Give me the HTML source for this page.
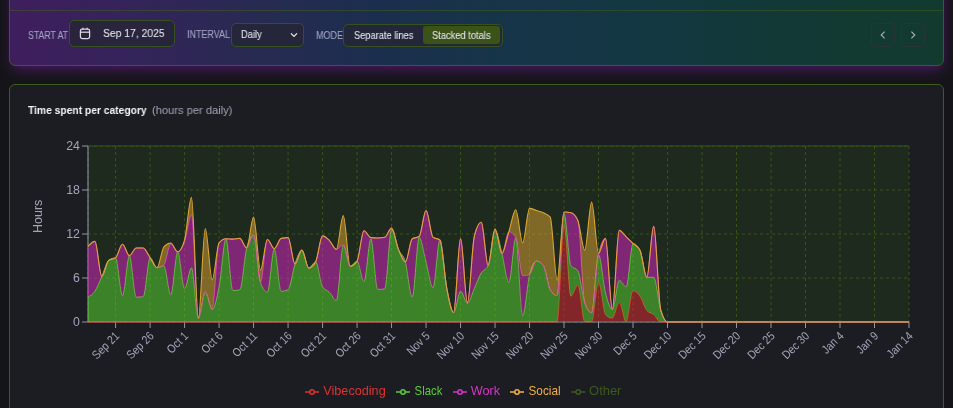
<!DOCTYPE html>
<html lang="en">
<head>
<meta charset="utf-8">
<title>Time spent per category</title>
<style>
*{box-sizing:border-box}
html,body{margin:0;padding:0}
body{width:953px;height:408px;overflow:hidden;background:#151519;color:#e6e8f0;
  font-family:"Liberation Sans","DejaVu Sans",sans-serif;font-size:12px;position:relative}
.toolbar{position:absolute;left:9px;top:-30px;width:935px;height:96px;border:1px solid #3f5c1c;border-radius:6px;
  background:linear-gradient(90deg,rgb(63,30,93) 0.3%,rgb(52,36,90) 12.9%,rgb(40,42,82) 25.8%,rgb(28,46,78) 38.6%,rgb(22,52,72) 51.4%,rgb(20,55,68) 64.3%,rgb(18,56,58) 77.1%,rgb(18,58,50) 89.9%,rgb(19,58,47) 100%);
  box-shadow:1px 6px 14px -3px rgba(112,30,155,.6)}
.sep{position:absolute;left:10px;width:933px;top:10px;height:1px;background:#3f5c1c;opacity:.55}
.t{-webkit-text-stroke:.1px currentColor;will-change:transform;position:absolute;white-space:nowrap;transform-origin:0 50%;line-height:1;color:#dfe0e9}
.upper{text-transform:uppercase;color:#a1a4c4}
.ctl{position:absolute;border:1px solid #36511d;border-radius:5px;background:rgba(38,38,52,.8)}
.nav{background:transparent;border-color:rgba(52,48,62,.7);border-radius:4px}
.on{position:absolute;border-radius:3px;background:#3b5319}
.ico{position:absolute;overflow:visible}
.card{position:absolute;left:9px;top:84px;width:935px;height:340px;border:1px solid #3f5c1c;border-radius:6px;background:#1c1d22}
svg.chart{will-change:transform;position:absolute;left:0;top:0;overflow:visible}
svg.chart text{font-family:"Liberation Sans","DejaVu Sans",sans-serif}
.tick text{font-size:12px;fill:#a0a5b8}
.ylab{font-size:13.3px;fill:#a0a5b8}
.legend text{font-size:13px}
</style>
</head>
<body>
<div role="toolbar" aria-label="Chart controls">
<div class="toolbar"></div>
<div class="sep"></div>
<span class="t upper" style="left:27.6px;top:30px;font-size:10px;line-height:11.07px;transform:scaleX(0.8707);">START AT</span>
<div class="ctl" style="left:69px;top:20px;width:106px;height:27px"></div>
<svg class="ico" style="left:79px;top:27px" width="12" height="13" viewBox="0 0 12 13" fill="none" stroke="#d9dae4" stroke-width="1.25" aria-hidden="true"><rect x="1.4" y="2.2" width="9.2" height="9.3" rx="1.7"/><line x1="1.4" y1="5.2" x2="10.6" y2="5.2"/><line x1="3.9" y1="0.8" x2="3.9" y2="2.6"/><line x1="8.1" y1="0.8" x2="8.1" y2="2.6"/></svg>
<span class="t" style="left:102.8px;top:27px;font-size:11.7px;line-height:11.89px;transform:scaleX(0.8863);">Sep 17, 2025</span>
<span class="t upper" style="left:186.6px;top:29px;font-size:10px;line-height:11.07px;transform:scaleX(0.8962);">INTERVAL</span>
<div class="ctl" style="left:231px;top:23px;width:73px;height:24px"></div>
<span class="t" style="left:241.1px;top:29px;font-size:10.5px;line-height:10.72px;transform:scaleX(0.8912);">Daily</span>
<svg class="ico" style="left:290px;top:31px" width="8" height="8" viewBox="0 0 8 8" fill="none" stroke="#e9eaf2" stroke-width="1.3"><path d="M1 2.4 L4 5.4 L7 2.4"/></svg>
<span class="t upper" style="left:315.8px;top:30px;font-size:10px;line-height:11.07px;transform:scaleX(0.9033);">MODE</span>
<div class="ctl" style="left:343px;top:24px;width:160px;height:23px"></div>
<div class="on" style="left:423px;top:26px;width:77px;height:18px"></div>
<span class="t" style="left:354px;top:30px;font-size:10.5px;line-height:10.72px;transform:scaleX(0.8834);">Separate lines</span>
<span class="t" style="left:432px;top:30px;font-size:10.5px;line-height:10.72px;transform:scaleX(0.8885);">Stacked totals</span>
<div class="ctl nav" style="left:871px;top:23px;width:24px;height:24px"></div>
<svg class="ico" style="left:879px;top:31px" width="8" height="8" viewBox="0 0 8 8" fill="none" stroke="#a4adb6" stroke-width="1.15"><path d="M5.6 0.6 L2.2 4 L5.6 7.4"/></svg>
<div class="ctl nav" style="left:901px;top:23px;width:24px;height:24px"></div>
<svg class="ico" style="left:909px;top:31px" width="8" height="8" viewBox="0 0 8 8" fill="none" stroke="#a4adb6" stroke-width="1.15"><path d="M2.4 0.6 L5.8 4 L2.4 7.4"/></svg>
</div>
<div role="region" aria-label="Time spent per category chart">
<div class="card"></div>
<span class="t" style="left:28.2px;top:104px;font-size:11.3px;line-height:12.17px;transform:scaleX(0.9102);color:#f2f3f7;font-weight:700;-webkit-text-stroke:0;">Time spent per category</span>
<span class="t" style="left:152px;top:104px;font-size:11.3px;line-height:12.17px;transform:scaleX(0.9847);color:#969bad;">(hours per daily)</span>
<svg class="chart" width="953" height="408" viewBox="0 0 953 408" role="img" aria-label="Time spent per category">
<path d="M88,246.47C90.3,243.9,92.6,241.33,94.9,241.33C97.2,241.33,99.5,276.53,101.8,276.53C104.1,276.53,106.4,262.11,108.7,260.4C111,258.69,113.3,259.54,115.6,257.83C117.9,256.12,120.2,244.27,122.5,244.27C124.8,244.27,127.1,255.63,129.39,255.63C131.69,255.63,133.99,247.93,136.29,247.93C138.59,247.93,140.89,247.93,143.19,247.93C145.49,247.93,147.79,254.53,150.09,257.83C152.39,261.13,154.69,267.73,156.99,267.73C159.29,267.73,161.59,249.42,163.89,246.83C166.19,244.24,168.49,242.95,170.79,242.95C173.09,242.95,175.39,251.82,177.69,251.82C179.99,251.82,182.29,247.84,184.59,239.87C186.89,231.9,189.19,197.33,191.49,197.33C193.79,197.33,196.09,318.33,198.39,318.33C200.69,318.33,202.99,228.43,205.29,228.43C207.59,228.43,209.89,279.83,212.18,279.83C214.48,279.83,216.78,245.49,219.08,242.8C221.38,240.11,223.68,238.77,225.98,238.77C228.28,238.77,230.58,239.13,232.88,239.13C235.18,239.13,237.48,238.4,239.78,238.4C242.08,238.4,244.38,247.93,246.68,247.93C248.98,247.93,251.28,217.13,253.58,217.13C255.88,217.13,258.18,269.93,260.48,269.93C262.78,269.93,265.08,239.5,267.38,239.5C269.68,239.5,271.98,248.67,274.28,248.67C276.58,248.67,278.88,238.89,281.18,238.4C283.48,237.91,285.78,237.67,288.08,237.67C290.38,237.67,292.68,264.07,294.97,264.07C297.27,264.07,299.57,250.13,301.87,250.13C304.17,250.13,306.47,268.1,308.77,268.1C311.07,268.1,313.37,266.02,315.67,261.87C317.97,257.71,320.27,235.83,322.57,235.83C324.87,235.83,327.17,238.34,329.47,240.6C331.77,242.86,334.07,249.4,336.37,249.4C338.67,249.4,340.97,215.67,343.27,215.67C345.57,215.67,347.87,266.27,350.17,266.27C352.47,266.27,354.77,264.56,357.07,261.13C359.37,257.71,361.67,230.7,363.97,230.7C366.27,230.7,368.57,237.42,370.87,237.67C373.17,237.91,375.46,238.03,377.76,238.03C380.06,238.03,382.36,237.79,384.66,237.3C386.96,236.81,389.26,228.13,391.56,228.13C393.86,228.13,396.16,243.78,398.46,249.4C400.76,255.02,403.06,261.87,405.36,261.87C407.66,261.87,409.96,240.23,412.26,238.77C414.56,237.3,416.86,238.03,419.16,236.57C421.46,235.1,423.76,210.53,426.06,210.53C428.36,210.53,430.66,235.59,432.96,237.3C435.26,239.01,437.56,238.16,439.86,239.87C442.16,241.58,444.46,276.17,446.76,288.27C449.06,300.37,451.36,312.47,453.66,312.47C455.96,312.47,458.25,238.77,460.55,238.77C462.85,238.77,465.15,303.08,467.45,303.08C469.75,303.08,472.05,245.49,474.35,236.2C476.65,226.91,478.95,222.27,481.25,222.27C483.55,222.27,485.85,265.53,488.15,265.53C490.45,265.53,492.75,228.87,495.05,228.87C497.35,228.87,499.65,253.43,501.95,253.43C504.25,253.43,506.55,239.07,508.85,231.8C511.15,224.53,513.45,209.8,515.75,209.8C518.05,209.8,520.35,242.8,522.65,242.8C524.95,242.8,527.25,208.33,529.55,208.33C531.85,208.33,534.15,209.8,536.45,210.53C538.75,211.27,541.04,211.63,543.34,212.73C545.64,213.83,547.94,214.2,550.24,217.13C552.54,220.07,554.84,280.2,557.14,280.2C559.44,280.2,561.74,212,564.04,212C566.34,212,568.64,212.24,570.94,212.73C573.24,213.22,575.54,215.3,577.84,220.43C580.14,225.57,582.44,250.13,584.74,250.13C587.04,250.13,589.34,202.1,591.64,202.1C593.94,202.1,596.24,253.43,598.54,253.43C600.84,253.43,603.14,238.4,605.44,238.4C607.74,238.4,610.04,309.53,612.34,309.53C614.64,309.53,616.94,230.33,619.24,230.33C621.54,230.33,623.83,234.59,626.13,236.79C628.43,238.99,630.73,241.31,633.03,243.53C635.33,245.76,637.63,245.73,639.93,250.13C642.23,254.53,644.53,277.27,646.83,277.27C649.13,277.27,651.43,226.3,653.73,226.3C656.03,226.3,658.33,301.22,660.63,309.53C662.93,317.84,665.23,322,667.53,322C669.83,322,672.13,322,674.43,322C676.73,322,679.03,322,681.33,322C683.63,322,685.93,322,688.23,322C690.53,322,692.83,322,695.13,322C697.43,322,699.73,322,702.03,322C704.32,322,706.62,322,708.92,322C711.22,322,713.52,322,715.82,322C718.12,322,720.42,322,722.72,322C725.02,322,727.32,322,729.62,322C731.92,322,734.22,322,736.52,322C738.82,322,741.12,322,743.42,322C745.72,322,748.02,322,750.32,322C752.62,322,754.92,322,757.22,322C759.52,322,761.82,322,764.12,322C766.42,322,768.72,322,771.02,322C773.32,322,775.62,322,777.92,322C780.22,322,782.52,322,784.82,322C787.11,322,789.41,322,791.71,322C794.01,322,796.31,322,798.61,322C800.91,322,803.21,322,805.51,322C807.81,322,810.11,322,812.41,322C814.71,322,817.01,322,819.31,322C821.61,322,823.91,322,826.21,322C828.51,322,830.81,322,833.11,322C835.41,322,837.71,322,840.01,322C842.31,322,844.61,322,846.91,322C849.21,322,851.51,322,853.81,322C856.11,322,858.41,322,860.71,322C863.01,322,865.31,322,867.61,322C869.9,322,872.2,322,874.5,322C876.8,322,879.1,322,881.4,322C883.7,322,886,322,888.3,322C890.6,322,892.9,322,895.2,322C897.5,322,899.8,322,902.1,322C904.4,322,906.7,322,909,322L909,146L88,146Z" fill="#1f2a1f" stroke="none"/>
<g stroke="#37531c" stroke-width="1" stroke-dasharray="3 3" fill="none">
<line x1="88" x2="909" y1="322" y2="322"/>
<line x1="88" x2="909" y1="278" y2="278"/>
<line x1="88" x2="909" y1="234" y2="234"/>
<line x1="88" x2="909" y1="190" y2="190"/>
<line x1="88" x2="909" y1="146" y2="146"/>
<line x1="88" x2="88" y1="146" y2="322"/>
<line x1="115.6" x2="115.6" y1="146" y2="322"/>
<line x1="150.09" x2="150.09" y1="146" y2="322"/>
<line x1="184.59" x2="184.59" y1="146" y2="322"/>
<line x1="219.08" x2="219.08" y1="146" y2="322"/>
<line x1="253.58" x2="253.58" y1="146" y2="322"/>
<line x1="288.08" x2="288.08" y1="146" y2="322"/>
<line x1="322.57" x2="322.57" y1="146" y2="322"/>
<line x1="357.07" x2="357.07" y1="146" y2="322"/>
<line x1="391.56" x2="391.56" y1="146" y2="322"/>
<line x1="426.06" x2="426.06" y1="146" y2="322"/>
<line x1="460.55" x2="460.55" y1="146" y2="322"/>
<line x1="495.05" x2="495.05" y1="146" y2="322"/>
<line x1="529.55" x2="529.55" y1="146" y2="322"/>
<line x1="564.04" x2="564.04" y1="146" y2="322"/>
<line x1="598.54" x2="598.54" y1="146" y2="322"/>
<line x1="633.03" x2="633.03" y1="146" y2="322"/>
<line x1="667.53" x2="667.53" y1="146" y2="322"/>
<line x1="702.03" x2="702.03" y1="146" y2="322"/>
<line x1="736.52" x2="736.52" y1="146" y2="322"/>
<line x1="771.02" x2="771.02" y1="146" y2="322"/>
<line x1="805.51" x2="805.51" y1="146" y2="322"/>
<line x1="840.01" x2="840.01" y1="146" y2="322"/>
<line x1="874.5" x2="874.5" y1="146" y2="322"/>
<line x1="909" x2="909" y1="146" y2="322"/>
</g>
<g stroke="#9297a8" stroke-width="1" fill="none">
<line x1="88" x2="88" y1="146" y2="322"/>
<line x1="88" x2="909" y1="322" y2="322"/>
<line x1="82" x2="88" y1="322" y2="322"/>
<line x1="82" x2="88" y1="278" y2="278"/>
<line x1="82" x2="88" y1="234" y2="234"/>
<line x1="82" x2="88" y1="190" y2="190"/>
<line x1="82" x2="88" y1="146" y2="146"/>
<line x1="115.6" x2="115.6" y1="322" y2="328"/>
<line x1="150.09" x2="150.09" y1="322" y2="328"/>
<line x1="184.59" x2="184.59" y1="322" y2="328"/>
<line x1="219.08" x2="219.08" y1="322" y2="328"/>
<line x1="253.58" x2="253.58" y1="322" y2="328"/>
<line x1="288.08" x2="288.08" y1="322" y2="328"/>
<line x1="322.57" x2="322.57" y1="322" y2="328"/>
<line x1="357.07" x2="357.07" y1="322" y2="328"/>
<line x1="391.56" x2="391.56" y1="322" y2="328"/>
<line x1="426.06" x2="426.06" y1="322" y2="328"/>
<line x1="460.55" x2="460.55" y1="322" y2="328"/>
<line x1="495.05" x2="495.05" y1="322" y2="328"/>
<line x1="529.55" x2="529.55" y1="322" y2="328"/>
<line x1="564.04" x2="564.04" y1="322" y2="328"/>
<line x1="598.54" x2="598.54" y1="322" y2="328"/>
<line x1="633.03" x2="633.03" y1="322" y2="328"/>
<line x1="667.53" x2="667.53" y1="322" y2="328"/>
<line x1="702.03" x2="702.03" y1="322" y2="328"/>
<line x1="736.52" x2="736.52" y1="322" y2="328"/>
<line x1="771.02" x2="771.02" y1="322" y2="328"/>
<line x1="805.51" x2="805.51" y1="322" y2="328"/>
<line x1="840.01" x2="840.01" y1="322" y2="328"/>
<line x1="874.5" x2="874.5" y1="322" y2="328"/>
<line x1="909" x2="909" y1="322" y2="328"/>
</g>
<path d="M88,322C90.3,322,92.6,322,94.9,322C97.2,322,99.5,322,101.8,322C104.1,322,106.4,322,108.7,322C111,322,113.3,322,115.6,322C117.9,322,120.2,322,122.5,322C124.8,322,127.1,322,129.39,322C131.69,322,133.99,322,136.29,322C138.59,322,140.89,322,143.19,322C145.49,322,147.79,322,150.09,322C152.39,322,154.69,322,156.99,322C159.29,322,161.59,322,163.89,322C166.19,322,168.49,322,170.79,322C173.09,322,175.39,322,177.69,322C179.99,322,182.29,322,184.59,322C186.89,322,189.19,322,191.49,322C193.79,322,196.09,322,198.39,322C200.69,322,202.99,322,205.29,322C207.59,322,209.89,322,212.18,322C214.48,322,216.78,322,219.08,322C221.38,322,223.68,322,225.98,322C228.28,322,230.58,322,232.88,322C235.18,322,237.48,322,239.78,322C242.08,322,244.38,322,246.68,322C248.98,322,251.28,322,253.58,322C255.88,322,258.18,322,260.48,322C262.78,322,265.08,322,267.38,322C269.68,322,271.98,322,274.28,322C276.58,322,278.88,322,281.18,322C283.48,322,285.78,322,288.08,322C290.38,322,292.68,322,294.97,322C297.27,322,299.57,322,301.87,322C304.17,322,306.47,322,308.77,322C311.07,322,313.37,322,315.67,322C317.97,322,320.27,322,322.57,322C324.87,322,327.17,322,329.47,322C331.77,322,334.07,322,336.37,322C338.67,322,340.97,322,343.27,322C345.57,322,347.87,322,350.17,322C352.47,322,354.77,322,357.07,322C359.37,322,361.67,322,363.97,322C366.27,322,368.57,322,370.87,322C373.17,322,375.46,322,377.76,322C380.06,322,382.36,322,384.66,322C386.96,322,389.26,322,391.56,322C393.86,322,396.16,322,398.46,322C400.76,322,403.06,322,405.36,322C407.66,322,409.96,322,412.26,322C414.56,322,416.86,322,419.16,322C421.46,322,423.76,322,426.06,322C428.36,322,430.66,322,432.96,322C435.26,322,437.56,322,439.86,322C442.16,322,444.46,322,446.76,322C449.06,322,451.36,322,453.66,322C455.96,322,458.25,322,460.55,322C462.85,322,465.15,322,467.45,322C469.75,322,472.05,322,474.35,322C476.65,322,478.95,322,481.25,322C483.55,322,485.85,322,488.15,322C490.45,322,492.75,322,495.05,322C497.35,322,499.65,322,501.95,322C504.25,322,506.55,322,508.85,322C511.15,322,513.45,322,515.75,322C518.05,322,520.35,322,522.65,322C524.95,322,527.25,322,529.55,322C531.85,322,534.15,322,536.45,322C538.75,322,541.04,322,543.34,322C545.64,322,547.94,322,550.24,322C552.54,322,554.84,322,557.14,322C559.44,322,561.74,226.67,564.04,226.67C566.34,226.67,568.64,296.33,570.94,296.33C573.24,296.33,575.54,285.33,577.84,285.33C580.14,285.33,582.44,322,584.74,322C587.04,322,589.34,322,591.64,322C593.94,322,596.24,282.55,598.54,282.55C600.84,282.55,603.14,312.22,605.44,314.67C607.74,317.11,610.04,318.33,612.34,318.33C614.64,318.33,616.94,302.57,619.24,302.57C621.54,302.57,623.83,322,626.13,322C628.43,322,630.73,290.83,633.03,290.83C635.33,290.83,637.63,293.03,639.93,296.33C642.23,299.63,644.53,307.94,646.83,310.63C649.13,313.32,651.43,312.77,653.73,314.67C656.03,316.56,658.33,322,660.63,322C662.93,322,665.23,322,667.53,322C669.83,322,672.13,322,674.43,322C676.73,322,679.03,322,681.33,322C683.63,322,685.93,322,688.23,322C690.53,322,692.83,322,695.13,322C697.43,322,699.73,322,702.03,322C704.32,322,706.62,322,708.92,322C711.22,322,713.52,322,715.82,322C718.12,322,720.42,322,722.72,322C725.02,322,727.32,322,729.62,322C731.92,322,734.22,322,736.52,322C738.82,322,741.12,322,743.42,322C745.72,322,748.02,322,750.32,322C752.62,322,754.92,322,757.22,322C759.52,322,761.82,322,764.12,322C766.42,322,768.72,322,771.02,322C773.32,322,775.62,322,777.92,322C780.22,322,782.52,322,784.82,322C787.11,322,789.41,322,791.71,322C794.01,322,796.31,322,798.61,322C800.91,322,803.21,322,805.51,322C807.81,322,810.11,322,812.41,322C814.71,322,817.01,322,819.31,322C821.61,322,823.91,322,826.21,322C828.51,322,830.81,322,833.11,322C835.41,322,837.71,322,840.01,322C842.31,322,844.61,322,846.91,322C849.21,322,851.51,322,853.81,322C856.11,322,858.41,322,860.71,322C863.01,322,865.31,322,867.61,322C869.9,322,872.2,322,874.5,322C876.8,322,879.1,322,881.4,322C883.7,322,886,322,888.3,322C890.6,322,892.9,322,895.2,322C897.5,322,899.8,322,902.1,322C904.4,322,906.7,322,909,322L909,322C906.7,322,904.4,322,902.1,322C899.8,322,897.5,322,895.2,322C892.9,322,890.6,322,888.3,322C886,322,883.7,322,881.4,322C879.1,322,876.8,322,874.5,322C872.2,322,869.9,322,867.61,322C865.31,322,863.01,322,860.71,322C858.41,322,856.11,322,853.81,322C851.51,322,849.21,322,846.91,322C844.61,322,842.31,322,840.01,322C837.71,322,835.41,322,833.11,322C830.81,322,828.51,322,826.21,322C823.91,322,821.61,322,819.31,322C817.01,322,814.71,322,812.41,322C810.11,322,807.81,322,805.51,322C803.21,322,800.91,322,798.61,322C796.31,322,794.01,322,791.71,322C789.41,322,787.11,322,784.82,322C782.52,322,780.22,322,777.92,322C775.62,322,773.32,322,771.02,322C768.72,322,766.42,322,764.12,322C761.82,322,759.52,322,757.22,322C754.92,322,752.62,322,750.32,322C748.02,322,745.72,322,743.42,322C741.12,322,738.82,322,736.52,322C734.22,322,731.92,322,729.62,322C727.32,322,725.02,322,722.72,322C720.42,322,718.12,322,715.82,322C713.52,322,711.22,322,708.92,322C706.62,322,704.32,322,702.03,322C699.73,322,697.43,322,695.13,322C692.83,322,690.53,322,688.23,322C685.93,322,683.63,322,681.33,322C679.03,322,676.73,322,674.43,322C672.13,322,669.83,322,667.53,322C665.23,322,662.93,322,660.63,322C658.33,322,656.03,322,653.73,322C651.43,322,649.13,322,646.83,322C644.53,322,642.23,322,639.93,322C637.63,322,635.33,322,633.03,322C630.73,322,628.43,322,626.13,322C623.83,322,621.54,322,619.24,322C616.94,322,614.64,322,612.34,322C610.04,322,607.74,322,605.44,322C603.14,322,600.84,322,598.54,322C596.24,322,593.94,322,591.64,322C589.34,322,587.04,322,584.74,322C582.44,322,580.14,322,577.84,322C575.54,322,573.24,322,570.94,322C568.64,322,566.34,322,564.04,322C561.74,322,559.44,322,557.14,322C554.84,322,552.54,322,550.24,322C547.94,322,545.64,322,543.34,322C541.04,322,538.75,322,536.45,322C534.15,322,531.85,322,529.55,322C527.25,322,524.95,322,522.65,322C520.35,322,518.05,322,515.75,322C513.45,322,511.15,322,508.85,322C506.55,322,504.25,322,501.95,322C499.65,322,497.35,322,495.05,322C492.75,322,490.45,322,488.15,322C485.85,322,483.55,322,481.25,322C478.95,322,476.65,322,474.35,322C472.05,322,469.75,322,467.45,322C465.15,322,462.85,322,460.55,322C458.25,322,455.96,322,453.66,322C451.36,322,449.06,322,446.76,322C444.46,322,442.16,322,439.86,322C437.56,322,435.26,322,432.96,322C430.66,322,428.36,322,426.06,322C423.76,322,421.46,322,419.16,322C416.86,322,414.56,322,412.26,322C409.96,322,407.66,322,405.36,322C403.06,322,400.76,322,398.46,322C396.16,322,393.86,322,391.56,322C389.26,322,386.96,322,384.66,322C382.36,322,380.06,322,377.76,322C375.46,322,373.17,322,370.87,322C368.57,322,366.27,322,363.97,322C361.67,322,359.37,322,357.07,322C354.77,322,352.47,322,350.17,322C347.87,322,345.57,322,343.27,322C340.97,322,338.67,322,336.37,322C334.07,322,331.77,322,329.47,322C327.17,322,324.87,322,322.57,322C320.27,322,317.97,322,315.67,322C313.37,322,311.07,322,308.77,322C306.47,322,304.17,322,301.87,322C299.57,322,297.27,322,294.97,322C292.68,322,290.38,322,288.08,322C285.78,322,283.48,322,281.18,322C278.88,322,276.58,322,274.28,322C271.98,322,269.68,322,267.38,322C265.08,322,262.78,322,260.48,322C258.18,322,255.88,322,253.58,322C251.28,322,248.98,322,246.68,322C244.38,322,242.08,322,239.78,322C237.48,322,235.18,322,232.88,322C230.58,322,228.28,322,225.98,322C223.68,322,221.38,322,219.08,322C216.78,322,214.48,322,212.18,322C209.89,322,207.59,322,205.29,322C202.99,322,200.69,322,198.39,322C196.09,322,193.79,322,191.49,322C189.19,322,186.89,322,184.59,322C182.29,322,179.99,322,177.69,322C175.39,322,173.09,322,170.79,322C168.49,322,166.19,322,163.89,322C161.59,322,159.29,322,156.99,322C154.69,322,152.39,322,150.09,322C147.79,322,145.49,322,143.19,322C140.89,322,138.59,322,136.29,322C133.99,322,131.69,322,129.39,322C127.1,322,124.8,322,122.5,322C120.2,322,117.9,322,115.6,322C113.3,322,111,322,108.7,322C106.4,322,104.1,322,101.8,322C99.5,322,97.2,322,94.9,322C92.6,322,90.3,322,88,322Z" fill="#d72e32" fill-opacity="0.55" stroke="none"/>
<path d="M88,322C90.3,322,92.6,322,94.9,322C97.2,322,99.5,322,101.8,322C104.1,322,106.4,322,108.7,322C111,322,113.3,322,115.6,322C117.9,322,120.2,322,122.5,322C124.8,322,127.1,322,129.39,322C131.69,322,133.99,322,136.29,322C138.59,322,140.89,322,143.19,322C145.49,322,147.79,322,150.09,322C152.39,322,154.69,322,156.99,322C159.29,322,161.59,322,163.89,322C166.19,322,168.49,322,170.79,322C173.09,322,175.39,322,177.69,322C179.99,322,182.29,322,184.59,322C186.89,322,189.19,322,191.49,322C193.79,322,196.09,322,198.39,322C200.69,322,202.99,322,205.29,322C207.59,322,209.89,322,212.18,322C214.48,322,216.78,322,219.08,322C221.38,322,223.68,322,225.98,322C228.28,322,230.58,322,232.88,322C235.18,322,237.48,322,239.78,322C242.08,322,244.38,322,246.68,322C248.98,322,251.28,322,253.58,322C255.88,322,258.18,322,260.48,322C262.78,322,265.08,322,267.38,322C269.68,322,271.98,322,274.28,322C276.58,322,278.88,322,281.18,322C283.48,322,285.78,322,288.08,322C290.38,322,292.68,322,294.97,322C297.27,322,299.57,322,301.87,322C304.17,322,306.47,322,308.77,322C311.07,322,313.37,322,315.67,322C317.97,322,320.27,322,322.57,322C324.87,322,327.17,322,329.47,322C331.77,322,334.07,322,336.37,322C338.67,322,340.97,322,343.27,322C345.57,322,347.87,322,350.17,322C352.47,322,354.77,322,357.07,322C359.37,322,361.67,322,363.97,322C366.27,322,368.57,322,370.87,322C373.17,322,375.46,322,377.76,322C380.06,322,382.36,322,384.66,322C386.96,322,389.26,322,391.56,322C393.86,322,396.16,322,398.46,322C400.76,322,403.06,322,405.36,322C407.66,322,409.96,322,412.26,322C414.56,322,416.86,322,419.16,322C421.46,322,423.76,322,426.06,322C428.36,322,430.66,322,432.96,322C435.26,322,437.56,322,439.86,322C442.16,322,444.46,322,446.76,322C449.06,322,451.36,322,453.66,322C455.96,322,458.25,322,460.55,322C462.85,322,465.15,322,467.45,322C469.75,322,472.05,322,474.35,322C476.65,322,478.95,322,481.25,322C483.55,322,485.85,322,488.15,322C490.45,322,492.75,322,495.05,322C497.35,322,499.65,322,501.95,322C504.25,322,506.55,322,508.85,322C511.15,322,513.45,322,515.75,322C518.05,322,520.35,322,522.65,322C524.95,322,527.25,322,529.55,322C531.85,322,534.15,322,536.45,322C538.75,322,541.04,322,543.34,322C545.64,322,547.94,322,550.24,322C552.54,322,554.84,322,557.14,322C559.44,322,561.74,226.67,564.04,226.67C566.34,226.67,568.64,296.33,570.94,296.33C573.24,296.33,575.54,285.33,577.84,285.33C580.14,285.33,582.44,322,584.74,322C587.04,322,589.34,322,591.64,322C593.94,322,596.24,282.55,598.54,282.55C600.84,282.55,603.14,312.22,605.44,314.67C607.74,317.11,610.04,318.33,612.34,318.33C614.64,318.33,616.94,302.57,619.24,302.57C621.54,302.57,623.83,322,626.13,322C628.43,322,630.73,290.83,633.03,290.83C635.33,290.83,637.63,293.03,639.93,296.33C642.23,299.63,644.53,307.94,646.83,310.63C649.13,313.32,651.43,312.77,653.73,314.67C656.03,316.56,658.33,322,660.63,322C662.93,322,665.23,322,667.53,322C669.83,322,672.13,322,674.43,322C676.73,322,679.03,322,681.33,322C683.63,322,685.93,322,688.23,322C690.53,322,692.83,322,695.13,322C697.43,322,699.73,322,702.03,322C704.32,322,706.62,322,708.92,322C711.22,322,713.52,322,715.82,322C718.12,322,720.42,322,722.72,322C725.02,322,727.32,322,729.62,322C731.92,322,734.22,322,736.52,322C738.82,322,741.12,322,743.42,322C745.72,322,748.02,322,750.32,322C752.62,322,754.92,322,757.22,322C759.52,322,761.82,322,764.12,322C766.42,322,768.72,322,771.02,322C773.32,322,775.62,322,777.92,322C780.22,322,782.52,322,784.82,322C787.11,322,789.41,322,791.71,322C794.01,322,796.31,322,798.61,322C800.91,322,803.21,322,805.51,322C807.81,322,810.11,322,812.41,322C814.71,322,817.01,322,819.31,322C821.61,322,823.91,322,826.21,322C828.51,322,830.81,322,833.11,322C835.41,322,837.71,322,840.01,322C842.31,322,844.61,322,846.91,322C849.21,322,851.51,322,853.81,322C856.11,322,858.41,322,860.71,322C863.01,322,865.31,322,867.61,322C869.9,322,872.2,322,874.5,322C876.8,322,879.1,322,881.4,322C883.7,322,886,322,888.3,322C890.6,322,892.9,322,895.2,322C897.5,322,899.8,322,902.1,322C904.4,322,906.7,322,909,322" fill="none" stroke="#dc3030" stroke-width="1" stroke-linejoin="round"/>
<path d="M88,297.07C90.3,295.84,92.6,294.62,94.9,291.2C97.2,287.78,99.5,281.67,101.8,276.53C104.1,271.4,106.4,262.11,108.7,260.4C111,258.69,113.3,257.83,115.6,257.83C117.9,257.83,120.2,295.6,122.5,295.6C124.8,295.6,127.1,255.63,129.39,255.63C131.69,255.63,133.99,297.07,136.29,297.07C138.59,297.07,140.89,296.94,143.19,296.7C145.49,296.46,147.79,257.83,150.09,257.83C152.39,257.83,154.69,267.73,156.99,267.73C159.29,267.73,161.59,265.9,163.89,265.9C166.19,265.9,168.49,294.72,170.79,294.72C173.09,294.72,175.39,251.82,177.69,251.82C179.99,251.82,182.29,288.63,184.59,288.63C186.89,288.63,189.19,267.73,191.49,267.73C193.79,267.73,196.09,318.33,198.39,318.33C200.69,318.33,202.99,292.3,205.29,292.3C207.59,292.3,209.89,309.53,212.18,309.53C214.48,309.53,216.78,298.59,219.08,286.8C221.38,275.01,223.68,238.77,225.98,238.77C228.28,238.77,230.58,290.47,232.88,290.47C235.18,290.47,237.48,290.22,239.78,289.73C242.08,289.24,244.38,256.49,246.68,247.93C248.98,239.38,251.28,235.1,253.58,235.1C255.88,235.1,258.18,276.04,260.48,282.4C262.78,288.76,265.08,291.93,267.38,291.93C269.68,291.93,271.98,248.67,274.28,248.67C276.58,248.67,278.88,291.2,281.18,291.2C283.48,291.2,285.78,290.71,288.08,289.73C290.38,288.76,292.68,270.67,294.97,264.07C297.27,257.47,299.57,250.13,301.87,250.13C304.17,250.13,306.47,268.1,308.77,268.1C311.07,268.1,313.37,261.87,315.67,261.87C317.97,261.87,320.27,283.13,322.57,286.8C324.87,290.47,327.17,290.04,329.47,292.3C331.77,294.56,334.07,300.37,336.37,300.37C338.67,300.37,340.97,245,343.27,245C345.57,245,347.87,266.27,350.17,266.27C352.47,266.27,354.77,261.13,357.07,261.13C359.37,261.13,361.67,281.67,363.97,281.67C366.27,281.67,368.57,238.77,370.87,238.77C373.17,238.77,375.46,289.37,377.76,289.37C380.06,289.37,382.36,289.2,384.66,288.85C386.96,288.51,389.26,229.23,391.56,229.23C393.86,229.23,396.16,243.96,398.46,249.4C400.76,254.84,403.06,253.92,405.36,261.87C407.66,269.81,409.96,297.07,412.26,297.07C414.56,297.07,416.86,237.3,419.16,237.3C421.46,237.3,423.76,253.49,426.06,261.87C428.36,270.24,430.66,287.53,432.96,287.53C435.26,287.53,437.56,239.87,439.86,239.87C442.16,239.87,444.46,276.17,446.76,288.27C449.06,300.37,451.36,312.47,453.66,312.47C455.96,312.47,458.25,291.2,460.55,291.2C462.85,291.2,465.15,303.08,467.45,303.08C469.75,303.08,472.05,293.3,474.35,288.27C476.65,283.23,478.95,276.66,481.25,272.87C483.55,269.08,485.85,270.42,488.15,265.53C490.45,260.64,492.75,230.33,495.05,230.33C497.35,230.33,499.65,244.76,501.95,253.43C504.25,262.11,506.55,282.4,508.85,282.4C511.15,282.4,513.45,237.67,515.75,237.67C518.05,237.67,520.35,315.77,522.65,315.77C524.95,315.77,527.25,283.74,529.55,274.7C531.85,265.66,534.15,261.13,536.45,261.13C538.75,261.13,541.04,262.6,543.34,265.53C545.64,268.47,547.94,286.43,550.24,290.1C552.54,293.77,554.84,295.6,557.14,295.6C559.44,295.6,561.74,213.47,564.04,213.47C566.34,213.47,568.64,262.11,570.94,265.53C573.24,268.96,575.54,267.24,577.84,270.67C580.14,274.09,582.44,296.33,584.74,302.93C587.04,309.53,589.34,312.83,591.64,312.83C593.94,312.83,596.24,254.53,598.54,254.53C600.84,254.53,603.14,283.13,605.44,292.3C607.74,301.47,610.04,309.53,612.34,309.53C614.64,309.53,616.94,280.2,619.24,280.2C621.54,280.2,623.83,286.8,626.13,286.8C628.43,286.8,630.73,243.53,633.03,243.53C635.33,243.53,637.63,245.73,639.93,250.13C642.23,254.53,644.53,277.27,646.83,277.27C649.13,277.27,651.43,277.27,653.73,277.27C656.03,277.27,658.33,302.08,660.63,309.53C662.93,316.99,665.23,322,667.53,322C669.83,322,672.13,322,674.43,322C676.73,322,679.03,322,681.33,322C683.63,322,685.93,322,688.23,322C690.53,322,692.83,322,695.13,322C697.43,322,699.73,322,702.03,322C704.32,322,706.62,322,708.92,322C711.22,322,713.52,322,715.82,322C718.12,322,720.42,322,722.72,322C725.02,322,727.32,322,729.62,322C731.92,322,734.22,322,736.52,322C738.82,322,741.12,322,743.42,322C745.72,322,748.02,322,750.32,322C752.62,322,754.92,322,757.22,322C759.52,322,761.82,322,764.12,322C766.42,322,768.72,322,771.02,322C773.32,322,775.62,322,777.92,322C780.22,322,782.52,322,784.82,322C787.11,322,789.41,322,791.71,322C794.01,322,796.31,322,798.61,322C800.91,322,803.21,322,805.51,322C807.81,322,810.11,322,812.41,322C814.71,322,817.01,322,819.31,322C821.61,322,823.91,322,826.21,322C828.51,322,830.81,322,833.11,322C835.41,322,837.71,322,840.01,322C842.31,322,844.61,322,846.91,322C849.21,322,851.51,322,853.81,322C856.11,322,858.41,322,860.71,322C863.01,322,865.31,322,867.61,322C869.9,322,872.2,322,874.5,322C876.8,322,879.1,322,881.4,322C883.7,322,886,322,888.3,322C890.6,322,892.9,322,895.2,322C897.5,322,899.8,322,902.1,322C904.4,322,906.7,322,909,322L909,322C906.7,322,904.4,322,902.1,322C899.8,322,897.5,322,895.2,322C892.9,322,890.6,322,888.3,322C886,322,883.7,322,881.4,322C879.1,322,876.8,322,874.5,322C872.2,322,869.9,322,867.61,322C865.31,322,863.01,322,860.71,322C858.41,322,856.11,322,853.81,322C851.51,322,849.21,322,846.91,322C844.61,322,842.31,322,840.01,322C837.71,322,835.41,322,833.11,322C830.81,322,828.51,322,826.21,322C823.91,322,821.61,322,819.31,322C817.01,322,814.71,322,812.41,322C810.11,322,807.81,322,805.51,322C803.21,322,800.91,322,798.61,322C796.31,322,794.01,322,791.71,322C789.41,322,787.11,322,784.82,322C782.52,322,780.22,322,777.92,322C775.62,322,773.32,322,771.02,322C768.72,322,766.42,322,764.12,322C761.82,322,759.52,322,757.22,322C754.92,322,752.62,322,750.32,322C748.02,322,745.72,322,743.42,322C741.12,322,738.82,322,736.52,322C734.22,322,731.92,322,729.62,322C727.32,322,725.02,322,722.72,322C720.42,322,718.12,322,715.82,322C713.52,322,711.22,322,708.92,322C706.62,322,704.32,322,702.03,322C699.73,322,697.43,322,695.13,322C692.83,322,690.53,322,688.23,322C685.93,322,683.63,322,681.33,322C679.03,322,676.73,322,674.43,322C672.13,322,669.83,322,667.53,322C665.23,322,662.93,322,660.63,322C658.33,322,656.03,316.56,653.73,314.67C651.43,312.77,649.13,313.32,646.83,310.63C644.53,307.94,642.23,299.63,639.93,296.33C637.63,293.03,635.33,290.83,633.03,290.83C630.73,290.83,628.43,322,626.13,322C623.83,322,621.54,302.57,619.24,302.57C616.94,302.57,614.64,318.33,612.34,318.33C610.04,318.33,607.74,317.11,605.44,314.67C603.14,312.22,600.84,282.55,598.54,282.55C596.24,282.55,593.94,322,591.64,322C589.34,322,587.04,322,584.74,322C582.44,322,580.14,285.33,577.84,285.33C575.54,285.33,573.24,296.33,570.94,296.33C568.64,296.33,566.34,226.67,564.04,226.67C561.74,226.67,559.44,322,557.14,322C554.84,322,552.54,322,550.24,322C547.94,322,545.64,322,543.34,322C541.04,322,538.75,322,536.45,322C534.15,322,531.85,322,529.55,322C527.25,322,524.95,322,522.65,322C520.35,322,518.05,322,515.75,322C513.45,322,511.15,322,508.85,322C506.55,322,504.25,322,501.95,322C499.65,322,497.35,322,495.05,322C492.75,322,490.45,322,488.15,322C485.85,322,483.55,322,481.25,322C478.95,322,476.65,322,474.35,322C472.05,322,469.75,322,467.45,322C465.15,322,462.85,322,460.55,322C458.25,322,455.96,322,453.66,322C451.36,322,449.06,322,446.76,322C444.46,322,442.16,322,439.86,322C437.56,322,435.26,322,432.96,322C430.66,322,428.36,322,426.06,322C423.76,322,421.46,322,419.16,322C416.86,322,414.56,322,412.26,322C409.96,322,407.66,322,405.36,322C403.06,322,400.76,322,398.46,322C396.16,322,393.86,322,391.56,322C389.26,322,386.96,322,384.66,322C382.36,322,380.06,322,377.76,322C375.46,322,373.17,322,370.87,322C368.57,322,366.27,322,363.97,322C361.67,322,359.37,322,357.07,322C354.77,322,352.47,322,350.17,322C347.87,322,345.57,322,343.27,322C340.97,322,338.67,322,336.37,322C334.07,322,331.77,322,329.47,322C327.17,322,324.87,322,322.57,322C320.27,322,317.97,322,315.67,322C313.37,322,311.07,322,308.77,322C306.47,322,304.17,322,301.87,322C299.57,322,297.27,322,294.97,322C292.68,322,290.38,322,288.08,322C285.78,322,283.48,322,281.18,322C278.88,322,276.58,322,274.28,322C271.98,322,269.68,322,267.38,322C265.08,322,262.78,322,260.48,322C258.18,322,255.88,322,253.58,322C251.28,322,248.98,322,246.68,322C244.38,322,242.08,322,239.78,322C237.48,322,235.18,322,232.88,322C230.58,322,228.28,322,225.98,322C223.68,322,221.38,322,219.08,322C216.78,322,214.48,322,212.18,322C209.89,322,207.59,322,205.29,322C202.99,322,200.69,322,198.39,322C196.09,322,193.79,322,191.49,322C189.19,322,186.89,322,184.59,322C182.29,322,179.99,322,177.69,322C175.39,322,173.09,322,170.79,322C168.49,322,166.19,322,163.89,322C161.59,322,159.29,322,156.99,322C154.69,322,152.39,322,150.09,322C147.79,322,145.49,322,143.19,322C140.89,322,138.59,322,136.29,322C133.99,322,131.69,322,129.39,322C127.1,322,124.8,322,122.5,322C120.2,322,117.9,322,115.6,322C113.3,322,111,322,108.7,322C106.4,322,104.1,322,101.8,322C99.5,322,97.2,322,94.9,322C92.6,322,90.3,322,88,322Z" fill="#58d52f" fill-opacity="0.55" stroke="none"/>
<path d="M88,297.07C90.3,295.84,92.6,294.62,94.9,291.2C97.2,287.78,99.5,281.67,101.8,276.53C104.1,271.4,106.4,262.11,108.7,260.4C111,258.69,113.3,257.83,115.6,257.83C117.9,257.83,120.2,295.6,122.5,295.6C124.8,295.6,127.1,255.63,129.39,255.63C131.69,255.63,133.99,297.07,136.29,297.07C138.59,297.07,140.89,296.94,143.19,296.7C145.49,296.46,147.79,257.83,150.09,257.83C152.39,257.83,154.69,267.73,156.99,267.73C159.29,267.73,161.59,265.9,163.89,265.9C166.19,265.9,168.49,294.72,170.79,294.72C173.09,294.72,175.39,251.82,177.69,251.82C179.99,251.82,182.29,288.63,184.59,288.63C186.89,288.63,189.19,267.73,191.49,267.73C193.79,267.73,196.09,318.33,198.39,318.33C200.69,318.33,202.99,292.3,205.29,292.3C207.59,292.3,209.89,309.53,212.18,309.53C214.48,309.53,216.78,298.59,219.08,286.8C221.38,275.01,223.68,238.77,225.98,238.77C228.28,238.77,230.58,290.47,232.88,290.47C235.18,290.47,237.48,290.22,239.78,289.73C242.08,289.24,244.38,256.49,246.68,247.93C248.98,239.38,251.28,235.1,253.58,235.1C255.88,235.1,258.18,276.04,260.48,282.4C262.78,288.76,265.08,291.93,267.38,291.93C269.68,291.93,271.98,248.67,274.28,248.67C276.58,248.67,278.88,291.2,281.18,291.2C283.48,291.2,285.78,290.71,288.08,289.73C290.38,288.76,292.68,270.67,294.97,264.07C297.27,257.47,299.57,250.13,301.87,250.13C304.17,250.13,306.47,268.1,308.77,268.1C311.07,268.1,313.37,261.87,315.67,261.87C317.97,261.87,320.27,283.13,322.57,286.8C324.87,290.47,327.17,290.04,329.47,292.3C331.77,294.56,334.07,300.37,336.37,300.37C338.67,300.37,340.97,245,343.27,245C345.57,245,347.87,266.27,350.17,266.27C352.47,266.27,354.77,261.13,357.07,261.13C359.37,261.13,361.67,281.67,363.97,281.67C366.27,281.67,368.57,238.77,370.87,238.77C373.17,238.77,375.46,289.37,377.76,289.37C380.06,289.37,382.36,289.2,384.66,288.85C386.96,288.51,389.26,229.23,391.56,229.23C393.86,229.23,396.16,243.96,398.46,249.4C400.76,254.84,403.06,253.92,405.36,261.87C407.66,269.81,409.96,297.07,412.26,297.07C414.56,297.07,416.86,237.3,419.16,237.3C421.46,237.3,423.76,253.49,426.06,261.87C428.36,270.24,430.66,287.53,432.96,287.53C435.26,287.53,437.56,239.87,439.86,239.87C442.16,239.87,444.46,276.17,446.76,288.27C449.06,300.37,451.36,312.47,453.66,312.47C455.96,312.47,458.25,291.2,460.55,291.2C462.85,291.2,465.15,303.08,467.45,303.08C469.75,303.08,472.05,293.3,474.35,288.27C476.65,283.23,478.95,276.66,481.25,272.87C483.55,269.08,485.85,270.42,488.15,265.53C490.45,260.64,492.75,230.33,495.05,230.33C497.35,230.33,499.65,244.76,501.95,253.43C504.25,262.11,506.55,282.4,508.85,282.4C511.15,282.4,513.45,237.67,515.75,237.67C518.05,237.67,520.35,315.77,522.65,315.77C524.95,315.77,527.25,283.74,529.55,274.7C531.85,265.66,534.15,261.13,536.45,261.13C538.75,261.13,541.04,262.6,543.34,265.53C545.64,268.47,547.94,286.43,550.24,290.1C552.54,293.77,554.84,295.6,557.14,295.6C559.44,295.6,561.74,213.47,564.04,213.47C566.34,213.47,568.64,262.11,570.94,265.53C573.24,268.96,575.54,267.24,577.84,270.67C580.14,274.09,582.44,296.33,584.74,302.93C587.04,309.53,589.34,312.83,591.64,312.83C593.94,312.83,596.24,254.53,598.54,254.53C600.84,254.53,603.14,283.13,605.44,292.3C607.74,301.47,610.04,309.53,612.34,309.53C614.64,309.53,616.94,280.2,619.24,280.2C621.54,280.2,623.83,286.8,626.13,286.8C628.43,286.8,630.73,243.53,633.03,243.53C635.33,243.53,637.63,245.73,639.93,250.13C642.23,254.53,644.53,277.27,646.83,277.27C649.13,277.27,651.43,277.27,653.73,277.27C656.03,277.27,658.33,302.08,660.63,309.53C662.93,316.99,665.23,322,667.53,322C669.83,322,672.13,322,674.43,322C676.73,322,679.03,322,681.33,322C683.63,322,685.93,322,688.23,322C690.53,322,692.83,322,695.13,322C697.43,322,699.73,322,702.03,322C704.32,322,706.62,322,708.92,322C711.22,322,713.52,322,715.82,322C718.12,322,720.42,322,722.72,322C725.02,322,727.32,322,729.62,322C731.92,322,734.22,322,736.52,322C738.82,322,741.12,322,743.42,322C745.72,322,748.02,322,750.32,322C752.62,322,754.92,322,757.22,322C759.52,322,761.82,322,764.12,322C766.42,322,768.72,322,771.02,322C773.32,322,775.62,322,777.92,322C780.22,322,782.52,322,784.82,322C787.11,322,789.41,322,791.71,322C794.01,322,796.31,322,798.61,322C800.91,322,803.21,322,805.51,322C807.81,322,810.11,322,812.41,322C814.71,322,817.01,322,819.31,322C821.61,322,823.91,322,826.21,322C828.51,322,830.81,322,833.11,322C835.41,322,837.71,322,840.01,322C842.31,322,844.61,322,846.91,322C849.21,322,851.51,322,853.81,322C856.11,322,858.41,322,860.71,322C863.01,322,865.31,322,867.61,322C869.9,322,872.2,322,874.5,322C876.8,322,879.1,322,881.4,322C883.7,322,886,322,888.3,322C890.6,322,892.9,322,895.2,322C897.5,322,899.8,322,902.1,322C904.4,322,906.7,322,909,322" fill="none" stroke="#5cd630" stroke-width="1" stroke-linejoin="round"/>
<path d="M88,246.47C90.3,243.9,92.6,241.33,94.9,241.33C97.2,241.33,99.5,276.53,101.8,276.53C104.1,276.53,106.4,262.11,108.7,260.4C111,258.69,113.3,259.54,115.6,257.83C117.9,256.12,120.2,244.27,122.5,244.27C124.8,244.27,127.1,255.63,129.39,255.63C131.69,255.63,133.99,247.93,136.29,247.93C138.59,247.93,140.89,247.93,143.19,247.93C145.49,247.93,147.79,254.53,150.09,257.83C152.39,261.13,154.69,267.73,156.99,267.73C159.29,267.73,161.59,266.88,163.89,265.17C166.19,263.46,168.49,244.12,170.79,244.12C173.09,244.12,175.39,251.82,177.69,251.82C179.99,251.82,182.29,247.85,184.59,241.7C186.89,235.55,189.19,214.93,191.49,214.93C193.79,214.93,196.09,318.33,198.39,318.33C200.69,318.33,202.99,291.93,205.29,291.93C207.59,291.93,209.89,309.53,212.18,309.53C214.48,309.53,216.78,245.49,219.08,242.8C221.38,240.11,223.68,238.77,225.98,238.77C228.28,238.77,230.58,239.13,232.88,239.13C235.18,239.13,237.48,238.4,239.78,238.4C242.08,238.4,244.38,247.93,246.68,247.93C248.98,247.93,251.28,234.73,253.58,234.73C255.88,234.73,258.18,282.4,260.48,282.4C262.78,282.4,265.08,239.5,267.38,239.5C269.68,239.5,271.98,248.67,274.28,248.67C276.58,248.67,278.88,238.89,281.18,238.4C283.48,237.91,285.78,237.67,288.08,237.67C290.38,237.67,292.68,264.07,294.97,264.07C297.27,264.07,299.57,250.13,301.87,250.13C304.17,250.13,306.47,268.1,308.77,268.1C311.07,268.1,313.37,266.02,315.67,261.87C317.97,257.71,320.27,235.83,322.57,235.83C324.87,235.83,327.17,238.34,329.47,240.6C331.77,242.86,334.07,249.4,336.37,249.4C338.67,249.4,340.97,245,343.27,245C345.57,245,347.87,266.27,350.17,266.27C352.47,266.27,354.77,264.56,357.07,261.13C359.37,257.71,361.67,230.7,363.97,230.7C366.27,230.7,368.57,237.42,370.87,237.67C373.17,237.91,375.46,238.03,377.76,238.03C380.06,238.03,382.36,237.79,384.66,237.3C386.96,236.81,389.26,228.13,391.56,228.13C393.86,228.13,396.16,243.78,398.46,249.4C400.76,255.02,403.06,261.87,405.36,261.87C407.66,261.87,409.96,240.23,412.26,238.77C414.56,237.3,416.86,238.03,419.16,236.57C421.46,235.1,423.76,210.53,426.06,210.53C428.36,210.53,430.66,235.59,432.96,237.3C435.26,239.01,437.56,238.16,439.86,239.87C442.16,241.58,444.46,276.17,446.76,288.27C449.06,300.37,451.36,312.47,453.66,312.47C455.96,312.47,458.25,238.77,460.55,238.77C462.85,238.77,465.15,303.08,467.45,303.08C469.75,303.08,472.05,245.49,474.35,236.2C476.65,226.91,478.95,222.27,481.25,222.27C483.55,222.27,485.85,265.53,488.15,265.53C490.45,265.53,492.75,230.33,495.05,230.33C497.35,230.33,499.65,253.43,501.95,253.43C504.25,253.43,506.55,231.8,508.85,231.8C511.15,231.8,513.45,233.76,515.75,237.67C518.05,241.58,520.35,275.8,522.65,275.8C524.95,275.8,527.25,275.43,529.55,274.7C531.85,273.97,534.15,261.13,536.45,261.13C538.75,261.13,541.04,262.6,543.34,265.53C545.64,268.47,547.94,286.43,550.24,290.1C552.54,293.77,554.84,295.6,557.14,295.6C559.44,295.6,561.74,212,564.04,212C566.34,212,568.64,212.24,570.94,212.73C573.24,213.22,575.54,215.3,577.84,220.43C580.14,225.57,582.44,296.33,584.74,302.93C587.04,309.53,589.34,312.83,591.64,312.83C593.94,312.83,596.24,265.29,598.54,254.53C600.84,243.78,603.14,238.4,605.44,238.4C607.74,238.4,610.04,309.53,612.34,309.53C614.64,309.53,616.94,230.33,619.24,230.33C621.54,230.33,623.83,234.59,626.13,236.79C628.43,238.99,630.73,241.31,633.03,243.53C635.33,245.76,637.63,245.73,639.93,250.13C642.23,254.53,644.53,277.27,646.83,277.27C649.13,277.27,651.43,226.3,653.73,226.3C656.03,226.3,658.33,301.22,660.63,309.53C662.93,317.84,665.23,322,667.53,322C669.83,322,672.13,322,674.43,322C676.73,322,679.03,322,681.33,322C683.63,322,685.93,322,688.23,322C690.53,322,692.83,322,695.13,322C697.43,322,699.73,322,702.03,322C704.32,322,706.62,322,708.92,322C711.22,322,713.52,322,715.82,322C718.12,322,720.42,322,722.72,322C725.02,322,727.32,322,729.62,322C731.92,322,734.22,322,736.52,322C738.82,322,741.12,322,743.42,322C745.72,322,748.02,322,750.32,322C752.62,322,754.92,322,757.22,322C759.52,322,761.82,322,764.12,322C766.42,322,768.72,322,771.02,322C773.32,322,775.62,322,777.92,322C780.22,322,782.52,322,784.82,322C787.11,322,789.41,322,791.71,322C794.01,322,796.31,322,798.61,322C800.91,322,803.21,322,805.51,322C807.81,322,810.11,322,812.41,322C814.71,322,817.01,322,819.31,322C821.61,322,823.91,322,826.21,322C828.51,322,830.81,322,833.11,322C835.41,322,837.71,322,840.01,322C842.31,322,844.61,322,846.91,322C849.21,322,851.51,322,853.81,322C856.11,322,858.41,322,860.71,322C863.01,322,865.31,322,867.61,322C869.9,322,872.2,322,874.5,322C876.8,322,879.1,322,881.4,322C883.7,322,886,322,888.3,322C890.6,322,892.9,322,895.2,322C897.5,322,899.8,322,902.1,322C904.4,322,906.7,322,909,322L909,322C906.7,322,904.4,322,902.1,322C899.8,322,897.5,322,895.2,322C892.9,322,890.6,322,888.3,322C886,322,883.7,322,881.4,322C879.1,322,876.8,322,874.5,322C872.2,322,869.9,322,867.61,322C865.31,322,863.01,322,860.71,322C858.41,322,856.11,322,853.81,322C851.51,322,849.21,322,846.91,322C844.61,322,842.31,322,840.01,322C837.71,322,835.41,322,833.11,322C830.81,322,828.51,322,826.21,322C823.91,322,821.61,322,819.31,322C817.01,322,814.71,322,812.41,322C810.11,322,807.81,322,805.51,322C803.21,322,800.91,322,798.61,322C796.31,322,794.01,322,791.71,322C789.41,322,787.11,322,784.82,322C782.52,322,780.22,322,777.92,322C775.62,322,773.32,322,771.02,322C768.72,322,766.42,322,764.12,322C761.82,322,759.52,322,757.22,322C754.92,322,752.62,322,750.32,322C748.02,322,745.72,322,743.42,322C741.12,322,738.82,322,736.52,322C734.22,322,731.92,322,729.62,322C727.32,322,725.02,322,722.72,322C720.42,322,718.12,322,715.82,322C713.52,322,711.22,322,708.92,322C706.62,322,704.32,322,702.03,322C699.73,322,697.43,322,695.13,322C692.83,322,690.53,322,688.23,322C685.93,322,683.63,322,681.33,322C679.03,322,676.73,322,674.43,322C672.13,322,669.83,322,667.53,322C665.23,322,662.93,316.99,660.63,309.53C658.33,302.08,656.03,277.27,653.73,277.27C651.43,277.27,649.13,277.27,646.83,277.27C644.53,277.27,642.23,254.53,639.93,250.13C637.63,245.73,635.33,243.53,633.03,243.53C630.73,243.53,628.43,286.8,626.13,286.8C623.83,286.8,621.54,280.2,619.24,280.2C616.94,280.2,614.64,309.53,612.34,309.53C610.04,309.53,607.74,301.47,605.44,292.3C603.14,283.13,600.84,254.53,598.54,254.53C596.24,254.53,593.94,312.83,591.64,312.83C589.34,312.83,587.04,309.53,584.74,302.93C582.44,296.33,580.14,274.09,577.84,270.67C575.54,267.24,573.24,268.96,570.94,265.53C568.64,262.11,566.34,213.47,564.04,213.47C561.74,213.47,559.44,295.6,557.14,295.6C554.84,295.6,552.54,293.77,550.24,290.1C547.94,286.43,545.64,268.47,543.34,265.53C541.04,262.6,538.75,261.13,536.45,261.13C534.15,261.13,531.85,265.66,529.55,274.7C527.25,283.74,524.95,315.77,522.65,315.77C520.35,315.77,518.05,237.67,515.75,237.67C513.45,237.67,511.15,282.4,508.85,282.4C506.55,282.4,504.25,262.11,501.95,253.43C499.65,244.76,497.35,230.33,495.05,230.33C492.75,230.33,490.45,260.64,488.15,265.53C485.85,270.42,483.55,269.08,481.25,272.87C478.95,276.66,476.65,283.23,474.35,288.27C472.05,293.3,469.75,303.08,467.45,303.08C465.15,303.08,462.85,291.2,460.55,291.2C458.25,291.2,455.96,312.47,453.66,312.47C451.36,312.47,449.06,300.37,446.76,288.27C444.46,276.17,442.16,239.87,439.86,239.87C437.56,239.87,435.26,287.53,432.96,287.53C430.66,287.53,428.36,270.24,426.06,261.87C423.76,253.49,421.46,237.3,419.16,237.3C416.86,237.3,414.56,297.07,412.26,297.07C409.96,297.07,407.66,269.81,405.36,261.87C403.06,253.92,400.76,254.84,398.46,249.4C396.16,243.96,393.86,229.23,391.56,229.23C389.26,229.23,386.96,288.51,384.66,288.85C382.36,289.2,380.06,289.37,377.76,289.37C375.46,289.37,373.17,238.77,370.87,238.77C368.57,238.77,366.27,281.67,363.97,281.67C361.67,281.67,359.37,261.13,357.07,261.13C354.77,261.13,352.47,266.27,350.17,266.27C347.87,266.27,345.57,245,343.27,245C340.97,245,338.67,300.37,336.37,300.37C334.07,300.37,331.77,294.56,329.47,292.3C327.17,290.04,324.87,290.47,322.57,286.8C320.27,283.13,317.97,261.87,315.67,261.87C313.37,261.87,311.07,268.1,308.77,268.1C306.47,268.1,304.17,250.13,301.87,250.13C299.57,250.13,297.27,257.47,294.97,264.07C292.68,270.67,290.38,288.76,288.08,289.73C285.78,290.71,283.48,291.2,281.18,291.2C278.88,291.2,276.58,248.67,274.28,248.67C271.98,248.67,269.68,291.93,267.38,291.93C265.08,291.93,262.78,288.76,260.48,282.4C258.18,276.04,255.88,235.1,253.58,235.1C251.28,235.1,248.98,239.38,246.68,247.93C244.38,256.49,242.08,289.24,239.78,289.73C237.48,290.22,235.18,290.47,232.88,290.47C230.58,290.47,228.28,238.77,225.98,238.77C223.68,238.77,221.38,275.01,219.08,286.8C216.78,298.59,214.48,309.53,212.18,309.53C209.89,309.53,207.59,292.3,205.29,292.3C202.99,292.3,200.69,318.33,198.39,318.33C196.09,318.33,193.79,267.73,191.49,267.73C189.19,267.73,186.89,288.63,184.59,288.63C182.29,288.63,179.99,251.82,177.69,251.82C175.39,251.82,173.09,294.72,170.79,294.72C168.49,294.72,166.19,265.9,163.89,265.9C161.59,265.9,159.29,267.73,156.99,267.73C154.69,267.73,152.39,257.83,150.09,257.83C147.79,257.83,145.49,296.46,143.19,296.7C140.89,296.94,138.59,297.07,136.29,297.07C133.99,297.07,131.69,255.63,129.39,255.63C127.1,255.63,124.8,295.6,122.5,295.6C120.2,295.6,117.9,257.83,115.6,257.83C113.3,257.83,111,258.69,108.7,260.4C106.4,262.11,104.1,271.4,101.8,276.53C99.5,281.67,97.2,287.78,94.9,291.2C92.6,294.62,90.3,295.84,88,297.07Z" fill="#d22eba" fill-opacity="0.55" stroke="none"/>
<path d="M88,246.47C90.3,243.9,92.6,241.33,94.9,241.33C97.2,241.33,99.5,276.53,101.8,276.53C104.1,276.53,106.4,262.11,108.7,260.4C111,258.69,113.3,259.54,115.6,257.83C117.9,256.12,120.2,244.27,122.5,244.27C124.8,244.27,127.1,255.63,129.39,255.63C131.69,255.63,133.99,247.93,136.29,247.93C138.59,247.93,140.89,247.93,143.19,247.93C145.49,247.93,147.79,254.53,150.09,257.83C152.39,261.13,154.69,267.73,156.99,267.73C159.29,267.73,161.59,266.88,163.89,265.17C166.19,263.46,168.49,244.12,170.79,244.12C173.09,244.12,175.39,251.82,177.69,251.82C179.99,251.82,182.29,247.85,184.59,241.7C186.89,235.55,189.19,214.93,191.49,214.93C193.79,214.93,196.09,318.33,198.39,318.33C200.69,318.33,202.99,291.93,205.29,291.93C207.59,291.93,209.89,309.53,212.18,309.53C214.48,309.53,216.78,245.49,219.08,242.8C221.38,240.11,223.68,238.77,225.98,238.77C228.28,238.77,230.58,239.13,232.88,239.13C235.18,239.13,237.48,238.4,239.78,238.4C242.08,238.4,244.38,247.93,246.68,247.93C248.98,247.93,251.28,234.73,253.58,234.73C255.88,234.73,258.18,282.4,260.48,282.4C262.78,282.4,265.08,239.5,267.38,239.5C269.68,239.5,271.98,248.67,274.28,248.67C276.58,248.67,278.88,238.89,281.18,238.4C283.48,237.91,285.78,237.67,288.08,237.67C290.38,237.67,292.68,264.07,294.97,264.07C297.27,264.07,299.57,250.13,301.87,250.13C304.17,250.13,306.47,268.1,308.77,268.1C311.07,268.1,313.37,266.02,315.67,261.87C317.97,257.71,320.27,235.83,322.57,235.83C324.87,235.83,327.17,238.34,329.47,240.6C331.77,242.86,334.07,249.4,336.37,249.4C338.67,249.4,340.97,245,343.27,245C345.57,245,347.87,266.27,350.17,266.27C352.47,266.27,354.77,264.56,357.07,261.13C359.37,257.71,361.67,230.7,363.97,230.7C366.27,230.7,368.57,237.42,370.87,237.67C373.17,237.91,375.46,238.03,377.76,238.03C380.06,238.03,382.36,237.79,384.66,237.3C386.96,236.81,389.26,228.13,391.56,228.13C393.86,228.13,396.16,243.78,398.46,249.4C400.76,255.02,403.06,261.87,405.36,261.87C407.66,261.87,409.96,240.23,412.26,238.77C414.56,237.3,416.86,238.03,419.16,236.57C421.46,235.1,423.76,210.53,426.06,210.53C428.36,210.53,430.66,235.59,432.96,237.3C435.26,239.01,437.56,238.16,439.86,239.87C442.16,241.58,444.46,276.17,446.76,288.27C449.06,300.37,451.36,312.47,453.66,312.47C455.96,312.47,458.25,238.77,460.55,238.77C462.85,238.77,465.15,303.08,467.45,303.08C469.75,303.08,472.05,245.49,474.35,236.2C476.65,226.91,478.95,222.27,481.25,222.27C483.55,222.27,485.85,265.53,488.15,265.53C490.45,265.53,492.75,230.33,495.05,230.33C497.35,230.33,499.65,253.43,501.95,253.43C504.25,253.43,506.55,231.8,508.85,231.8C511.15,231.8,513.45,233.76,515.75,237.67C518.05,241.58,520.35,275.8,522.65,275.8C524.95,275.8,527.25,275.43,529.55,274.7C531.85,273.97,534.15,261.13,536.45,261.13C538.75,261.13,541.04,262.6,543.34,265.53C545.64,268.47,547.94,286.43,550.24,290.1C552.54,293.77,554.84,295.6,557.14,295.6C559.44,295.6,561.74,212,564.04,212C566.34,212,568.64,212.24,570.94,212.73C573.24,213.22,575.54,215.3,577.84,220.43C580.14,225.57,582.44,296.33,584.74,302.93C587.04,309.53,589.34,312.83,591.64,312.83C593.94,312.83,596.24,265.29,598.54,254.53C600.84,243.78,603.14,238.4,605.44,238.4C607.74,238.4,610.04,309.53,612.34,309.53C614.64,309.53,616.94,230.33,619.24,230.33C621.54,230.33,623.83,234.59,626.13,236.79C628.43,238.99,630.73,241.31,633.03,243.53C635.33,245.76,637.63,245.73,639.93,250.13C642.23,254.53,644.53,277.27,646.83,277.27C649.13,277.27,651.43,226.3,653.73,226.3C656.03,226.3,658.33,301.22,660.63,309.53C662.93,317.84,665.23,322,667.53,322C669.83,322,672.13,322,674.43,322C676.73,322,679.03,322,681.33,322C683.63,322,685.93,322,688.23,322C690.53,322,692.83,322,695.13,322C697.43,322,699.73,322,702.03,322C704.32,322,706.62,322,708.92,322C711.22,322,713.52,322,715.82,322C718.12,322,720.42,322,722.72,322C725.02,322,727.32,322,729.62,322C731.92,322,734.22,322,736.52,322C738.82,322,741.12,322,743.42,322C745.72,322,748.02,322,750.32,322C752.62,322,754.92,322,757.22,322C759.52,322,761.82,322,764.12,322C766.42,322,768.72,322,771.02,322C773.32,322,775.62,322,777.92,322C780.22,322,782.52,322,784.82,322C787.11,322,789.41,322,791.71,322C794.01,322,796.31,322,798.61,322C800.91,322,803.21,322,805.51,322C807.81,322,810.11,322,812.41,322C814.71,322,817.01,322,819.31,322C821.61,322,823.91,322,826.21,322C828.51,322,830.81,322,833.11,322C835.41,322,837.71,322,840.01,322C842.31,322,844.61,322,846.91,322C849.21,322,851.51,322,853.81,322C856.11,322,858.41,322,860.71,322C863.01,322,865.31,322,867.61,322C869.9,322,872.2,322,874.5,322C876.8,322,879.1,322,881.4,322C883.7,322,886,322,888.3,322C890.6,322,892.9,322,895.2,322C897.5,322,899.8,322,902.1,322C904.4,322,906.7,322,909,322" fill="none" stroke="#d633c8" stroke-width="1" stroke-linejoin="round"/>
<path d="M88,246.47C90.3,243.9,92.6,241.33,94.9,241.33C97.2,241.33,99.5,276.53,101.8,276.53C104.1,276.53,106.4,262.11,108.7,260.4C111,258.69,113.3,259.54,115.6,257.83C117.9,256.12,120.2,244.27,122.5,244.27C124.8,244.27,127.1,255.63,129.39,255.63C131.69,255.63,133.99,247.93,136.29,247.93C138.59,247.93,140.89,247.93,143.19,247.93C145.49,247.93,147.79,254.53,150.09,257.83C152.39,261.13,154.69,267.73,156.99,267.73C159.29,267.73,161.59,249.42,163.89,246.83C166.19,244.24,168.49,242.95,170.79,242.95C173.09,242.95,175.39,251.82,177.69,251.82C179.99,251.82,182.29,247.84,184.59,239.87C186.89,231.9,189.19,197.33,191.49,197.33C193.79,197.33,196.09,318.33,198.39,318.33C200.69,318.33,202.99,228.43,205.29,228.43C207.59,228.43,209.89,279.83,212.18,279.83C214.48,279.83,216.78,245.49,219.08,242.8C221.38,240.11,223.68,238.77,225.98,238.77C228.28,238.77,230.58,239.13,232.88,239.13C235.18,239.13,237.48,238.4,239.78,238.4C242.08,238.4,244.38,247.93,246.68,247.93C248.98,247.93,251.28,217.13,253.58,217.13C255.88,217.13,258.18,269.93,260.48,269.93C262.78,269.93,265.08,239.5,267.38,239.5C269.68,239.5,271.98,248.67,274.28,248.67C276.58,248.67,278.88,238.89,281.18,238.4C283.48,237.91,285.78,237.67,288.08,237.67C290.38,237.67,292.68,264.07,294.97,264.07C297.27,264.07,299.57,250.13,301.87,250.13C304.17,250.13,306.47,268.1,308.77,268.1C311.07,268.1,313.37,266.02,315.67,261.87C317.97,257.71,320.27,235.83,322.57,235.83C324.87,235.83,327.17,238.34,329.47,240.6C331.77,242.86,334.07,249.4,336.37,249.4C338.67,249.4,340.97,215.67,343.27,215.67C345.57,215.67,347.87,266.27,350.17,266.27C352.47,266.27,354.77,264.56,357.07,261.13C359.37,257.71,361.67,230.7,363.97,230.7C366.27,230.7,368.57,237.42,370.87,237.67C373.17,237.91,375.46,238.03,377.76,238.03C380.06,238.03,382.36,237.79,384.66,237.3C386.96,236.81,389.26,228.13,391.56,228.13C393.86,228.13,396.16,243.78,398.46,249.4C400.76,255.02,403.06,261.87,405.36,261.87C407.66,261.87,409.96,240.23,412.26,238.77C414.56,237.3,416.86,238.03,419.16,236.57C421.46,235.1,423.76,210.53,426.06,210.53C428.36,210.53,430.66,235.59,432.96,237.3C435.26,239.01,437.56,238.16,439.86,239.87C442.16,241.58,444.46,276.17,446.76,288.27C449.06,300.37,451.36,312.47,453.66,312.47C455.96,312.47,458.25,238.77,460.55,238.77C462.85,238.77,465.15,303.08,467.45,303.08C469.75,303.08,472.05,245.49,474.35,236.2C476.65,226.91,478.95,222.27,481.25,222.27C483.55,222.27,485.85,265.53,488.15,265.53C490.45,265.53,492.75,228.87,495.05,228.87C497.35,228.87,499.65,253.43,501.95,253.43C504.25,253.43,506.55,239.07,508.85,231.8C511.15,224.53,513.45,209.8,515.75,209.8C518.05,209.8,520.35,242.8,522.65,242.8C524.95,242.8,527.25,208.33,529.55,208.33C531.85,208.33,534.15,209.8,536.45,210.53C538.75,211.27,541.04,211.63,543.34,212.73C545.64,213.83,547.94,214.2,550.24,217.13C552.54,220.07,554.84,280.2,557.14,280.2C559.44,280.2,561.74,212,564.04,212C566.34,212,568.64,212.24,570.94,212.73C573.24,213.22,575.54,215.3,577.84,220.43C580.14,225.57,582.44,250.13,584.74,250.13C587.04,250.13,589.34,202.1,591.64,202.1C593.94,202.1,596.24,253.43,598.54,253.43C600.84,253.43,603.14,238.4,605.44,238.4C607.74,238.4,610.04,309.53,612.34,309.53C614.64,309.53,616.94,230.33,619.24,230.33C621.54,230.33,623.83,234.59,626.13,236.79C628.43,238.99,630.73,241.31,633.03,243.53C635.33,245.76,637.63,245.73,639.93,250.13C642.23,254.53,644.53,277.27,646.83,277.27C649.13,277.27,651.43,226.3,653.73,226.3C656.03,226.3,658.33,301.22,660.63,309.53C662.93,317.84,665.23,322,667.53,322C669.83,322,672.13,322,674.43,322C676.73,322,679.03,322,681.33,322C683.63,322,685.93,322,688.23,322C690.53,322,692.83,322,695.13,322C697.43,322,699.73,322,702.03,322C704.32,322,706.62,322,708.92,322C711.22,322,713.52,322,715.82,322C718.12,322,720.42,322,722.72,322C725.02,322,727.32,322,729.62,322C731.92,322,734.22,322,736.52,322C738.82,322,741.12,322,743.42,322C745.72,322,748.02,322,750.32,322C752.62,322,754.92,322,757.22,322C759.52,322,761.82,322,764.12,322C766.42,322,768.72,322,771.02,322C773.32,322,775.62,322,777.92,322C780.22,322,782.52,322,784.82,322C787.11,322,789.41,322,791.71,322C794.01,322,796.31,322,798.61,322C800.91,322,803.21,322,805.51,322C807.81,322,810.11,322,812.41,322C814.71,322,817.01,322,819.31,322C821.61,322,823.91,322,826.21,322C828.51,322,830.81,322,833.11,322C835.41,322,837.71,322,840.01,322C842.31,322,844.61,322,846.91,322C849.21,322,851.51,322,853.81,322C856.11,322,858.41,322,860.71,322C863.01,322,865.31,322,867.61,322C869.9,322,872.2,322,874.5,322C876.8,322,879.1,322,881.4,322C883.7,322,886,322,888.3,322C890.6,322,892.9,322,895.2,322C897.5,322,899.8,322,902.1,322C904.4,322,906.7,322,909,322L909,322C906.7,322,904.4,322,902.1,322C899.8,322,897.5,322,895.2,322C892.9,322,890.6,322,888.3,322C886,322,883.7,322,881.4,322C879.1,322,876.8,322,874.5,322C872.2,322,869.9,322,867.61,322C865.31,322,863.01,322,860.71,322C858.41,322,856.11,322,853.81,322C851.51,322,849.21,322,846.91,322C844.61,322,842.31,322,840.01,322C837.71,322,835.41,322,833.11,322C830.81,322,828.51,322,826.21,322C823.91,322,821.61,322,819.31,322C817.01,322,814.71,322,812.41,322C810.11,322,807.81,322,805.51,322C803.21,322,800.91,322,798.61,322C796.31,322,794.01,322,791.71,322C789.41,322,787.11,322,784.82,322C782.52,322,780.22,322,777.92,322C775.62,322,773.32,322,771.02,322C768.72,322,766.42,322,764.12,322C761.82,322,759.52,322,757.22,322C754.92,322,752.62,322,750.32,322C748.02,322,745.72,322,743.42,322C741.12,322,738.82,322,736.52,322C734.22,322,731.92,322,729.62,322C727.32,322,725.02,322,722.72,322C720.42,322,718.12,322,715.82,322C713.52,322,711.22,322,708.92,322C706.62,322,704.32,322,702.03,322C699.73,322,697.43,322,695.13,322C692.83,322,690.53,322,688.23,322C685.93,322,683.63,322,681.33,322C679.03,322,676.73,322,674.43,322C672.13,322,669.83,322,667.53,322C665.23,322,662.93,317.84,660.63,309.53C658.33,301.22,656.03,226.3,653.73,226.3C651.43,226.3,649.13,277.27,646.83,277.27C644.53,277.27,642.23,254.53,639.93,250.13C637.63,245.73,635.33,245.76,633.03,243.53C630.73,241.31,628.43,238.99,626.13,236.79C623.83,234.59,621.54,230.33,619.24,230.33C616.94,230.33,614.64,309.53,612.34,309.53C610.04,309.53,607.74,238.4,605.44,238.4C603.14,238.4,600.84,243.78,598.54,254.53C596.24,265.29,593.94,312.83,591.64,312.83C589.34,312.83,587.04,309.53,584.74,302.93C582.44,296.33,580.14,225.57,577.84,220.43C575.54,215.3,573.24,213.22,570.94,212.73C568.64,212.24,566.34,212,564.04,212C561.74,212,559.44,295.6,557.14,295.6C554.84,295.6,552.54,293.77,550.24,290.1C547.94,286.43,545.64,268.47,543.34,265.53C541.04,262.6,538.75,261.13,536.45,261.13C534.15,261.13,531.85,273.97,529.55,274.7C527.25,275.43,524.95,275.8,522.65,275.8C520.35,275.8,518.05,241.58,515.75,237.67C513.45,233.76,511.15,231.8,508.85,231.8C506.55,231.8,504.25,253.43,501.95,253.43C499.65,253.43,497.35,230.33,495.05,230.33C492.75,230.33,490.45,265.53,488.15,265.53C485.85,265.53,483.55,222.27,481.25,222.27C478.95,222.27,476.65,226.91,474.35,236.2C472.05,245.49,469.75,303.08,467.45,303.08C465.15,303.08,462.85,238.77,460.55,238.77C458.25,238.77,455.96,312.47,453.66,312.47C451.36,312.47,449.06,300.37,446.76,288.27C444.46,276.17,442.16,241.58,439.86,239.87C437.56,238.16,435.26,239.01,432.96,237.3C430.66,235.59,428.36,210.53,426.06,210.53C423.76,210.53,421.46,235.1,419.16,236.57C416.86,238.03,414.56,237.3,412.26,238.77C409.96,240.23,407.66,261.87,405.36,261.87C403.06,261.87,400.76,255.02,398.46,249.4C396.16,243.78,393.86,228.13,391.56,228.13C389.26,228.13,386.96,236.81,384.66,237.3C382.36,237.79,380.06,238.03,377.76,238.03C375.46,238.03,373.17,237.91,370.87,237.67C368.57,237.42,366.27,230.7,363.97,230.7C361.67,230.7,359.37,257.71,357.07,261.13C354.77,264.56,352.47,266.27,350.17,266.27C347.87,266.27,345.57,245,343.27,245C340.97,245,338.67,249.4,336.37,249.4C334.07,249.4,331.77,242.86,329.47,240.6C327.17,238.34,324.87,235.83,322.57,235.83C320.27,235.83,317.97,257.71,315.67,261.87C313.37,266.02,311.07,268.1,308.77,268.1C306.47,268.1,304.17,250.13,301.87,250.13C299.57,250.13,297.27,264.07,294.97,264.07C292.68,264.07,290.38,237.67,288.08,237.67C285.78,237.67,283.48,237.91,281.18,238.4C278.88,238.89,276.58,248.67,274.28,248.67C271.98,248.67,269.68,239.5,267.38,239.5C265.08,239.5,262.78,282.4,260.48,282.4C258.18,282.4,255.88,234.73,253.58,234.73C251.28,234.73,248.98,247.93,246.68,247.93C244.38,247.93,242.08,238.4,239.78,238.4C237.48,238.4,235.18,239.13,232.88,239.13C230.58,239.13,228.28,238.77,225.98,238.77C223.68,238.77,221.38,240.11,219.08,242.8C216.78,245.49,214.48,309.53,212.18,309.53C209.89,309.53,207.59,291.93,205.29,291.93C202.99,291.93,200.69,318.33,198.39,318.33C196.09,318.33,193.79,214.93,191.49,214.93C189.19,214.93,186.89,235.55,184.59,241.7C182.29,247.85,179.99,251.82,177.69,251.82C175.39,251.82,173.09,244.12,170.79,244.12C168.49,244.12,166.19,263.46,163.89,265.17C161.59,266.88,159.29,267.73,156.99,267.73C154.69,267.73,152.39,261.13,150.09,257.83C147.79,254.53,145.49,247.93,143.19,247.93C140.89,247.93,138.59,247.93,136.29,247.93C133.99,247.93,131.69,255.63,129.39,255.63C127.1,255.63,124.8,244.27,122.5,244.27C120.2,244.27,117.9,256.12,115.6,257.83C113.3,259.54,111,258.69,108.7,260.4C106.4,262.11,104.1,276.53,101.8,276.53C99.5,276.53,97.2,241.33,94.9,241.33C92.6,241.33,90.3,243.9,88,246.47Z" fill="#d2a52d" fill-opacity="0.55" stroke="none"/>
<path d="M88,246.47C90.3,243.9,92.6,241.33,94.9,241.33C97.2,241.33,99.5,276.53,101.8,276.53C104.1,276.53,106.4,262.11,108.7,260.4C111,258.69,113.3,259.54,115.6,257.83C117.9,256.12,120.2,244.27,122.5,244.27C124.8,244.27,127.1,255.63,129.39,255.63C131.69,255.63,133.99,247.93,136.29,247.93C138.59,247.93,140.89,247.93,143.19,247.93C145.49,247.93,147.79,254.53,150.09,257.83C152.39,261.13,154.69,267.73,156.99,267.73C159.29,267.73,161.59,249.42,163.89,246.83C166.19,244.24,168.49,242.95,170.79,242.95C173.09,242.95,175.39,251.82,177.69,251.82C179.99,251.82,182.29,247.84,184.59,239.87C186.89,231.9,189.19,197.33,191.49,197.33C193.79,197.33,196.09,318.33,198.39,318.33C200.69,318.33,202.99,228.43,205.29,228.43C207.59,228.43,209.89,279.83,212.18,279.83C214.48,279.83,216.78,245.49,219.08,242.8C221.38,240.11,223.68,238.77,225.98,238.77C228.28,238.77,230.58,239.13,232.88,239.13C235.18,239.13,237.48,238.4,239.78,238.4C242.08,238.4,244.38,247.93,246.68,247.93C248.98,247.93,251.28,217.13,253.58,217.13C255.88,217.13,258.18,269.93,260.48,269.93C262.78,269.93,265.08,239.5,267.38,239.5C269.68,239.5,271.98,248.67,274.28,248.67C276.58,248.67,278.88,238.89,281.18,238.4C283.48,237.91,285.78,237.67,288.08,237.67C290.38,237.67,292.68,264.07,294.97,264.07C297.27,264.07,299.57,250.13,301.87,250.13C304.17,250.13,306.47,268.1,308.77,268.1C311.07,268.1,313.37,266.02,315.67,261.87C317.97,257.71,320.27,235.83,322.57,235.83C324.87,235.83,327.17,238.34,329.47,240.6C331.77,242.86,334.07,249.4,336.37,249.4C338.67,249.4,340.97,215.67,343.27,215.67C345.57,215.67,347.87,266.27,350.17,266.27C352.47,266.27,354.77,264.56,357.07,261.13C359.37,257.71,361.67,230.7,363.97,230.7C366.27,230.7,368.57,237.42,370.87,237.67C373.17,237.91,375.46,238.03,377.76,238.03C380.06,238.03,382.36,237.79,384.66,237.3C386.96,236.81,389.26,228.13,391.56,228.13C393.86,228.13,396.16,243.78,398.46,249.4C400.76,255.02,403.06,261.87,405.36,261.87C407.66,261.87,409.96,240.23,412.26,238.77C414.56,237.3,416.86,238.03,419.16,236.57C421.46,235.1,423.76,210.53,426.06,210.53C428.36,210.53,430.66,235.59,432.96,237.3C435.26,239.01,437.56,238.16,439.86,239.87C442.16,241.58,444.46,276.17,446.76,288.27C449.06,300.37,451.36,312.47,453.66,312.47C455.96,312.47,458.25,238.77,460.55,238.77C462.85,238.77,465.15,303.08,467.45,303.08C469.75,303.08,472.05,245.49,474.35,236.2C476.65,226.91,478.95,222.27,481.25,222.27C483.55,222.27,485.85,265.53,488.15,265.53C490.45,265.53,492.75,228.87,495.05,228.87C497.35,228.87,499.65,253.43,501.95,253.43C504.25,253.43,506.55,239.07,508.85,231.8C511.15,224.53,513.45,209.8,515.75,209.8C518.05,209.8,520.35,242.8,522.65,242.8C524.95,242.8,527.25,208.33,529.55,208.33C531.85,208.33,534.15,209.8,536.45,210.53C538.75,211.27,541.04,211.63,543.34,212.73C545.64,213.83,547.94,214.2,550.24,217.13C552.54,220.07,554.84,280.2,557.14,280.2C559.44,280.2,561.74,212,564.04,212C566.34,212,568.64,212.24,570.94,212.73C573.24,213.22,575.54,215.3,577.84,220.43C580.14,225.57,582.44,250.13,584.74,250.13C587.04,250.13,589.34,202.1,591.64,202.1C593.94,202.1,596.24,253.43,598.54,253.43C600.84,253.43,603.14,238.4,605.44,238.4C607.74,238.4,610.04,309.53,612.34,309.53C614.64,309.53,616.94,230.33,619.24,230.33C621.54,230.33,623.83,234.59,626.13,236.79C628.43,238.99,630.73,241.31,633.03,243.53C635.33,245.76,637.63,245.73,639.93,250.13C642.23,254.53,644.53,277.27,646.83,277.27C649.13,277.27,651.43,226.3,653.73,226.3C656.03,226.3,658.33,301.22,660.63,309.53C662.93,317.84,665.23,322,667.53,322C669.83,322,672.13,322,674.43,322C676.73,322,679.03,322,681.33,322C683.63,322,685.93,322,688.23,322C690.53,322,692.83,322,695.13,322C697.43,322,699.73,322,702.03,322C704.32,322,706.62,322,708.92,322C711.22,322,713.52,322,715.82,322C718.12,322,720.42,322,722.72,322C725.02,322,727.32,322,729.62,322C731.92,322,734.22,322,736.52,322C738.82,322,741.12,322,743.42,322C745.72,322,748.02,322,750.32,322C752.62,322,754.92,322,757.22,322C759.52,322,761.82,322,764.12,322C766.42,322,768.72,322,771.02,322C773.32,322,775.62,322,777.92,322C780.22,322,782.52,322,784.82,322C787.11,322,789.41,322,791.71,322C794.01,322,796.31,322,798.61,322C800.91,322,803.21,322,805.51,322C807.81,322,810.11,322,812.41,322C814.71,322,817.01,322,819.31,322C821.61,322,823.91,322,826.21,322C828.51,322,830.81,322,833.11,322C835.41,322,837.71,322,840.01,322C842.31,322,844.61,322,846.91,322C849.21,322,851.51,322,853.81,322C856.11,322,858.41,322,860.71,322C863.01,322,865.31,322,867.61,322C869.9,322,872.2,322,874.5,322C876.8,322,879.1,322,881.4,322C883.7,322,886,322,888.3,322C890.6,322,892.9,322,895.2,322C897.5,322,899.8,322,902.1,322C904.4,322,906.7,322,909,322" fill="none" stroke="#dca62e" stroke-width="1.1" stroke-linejoin="round"/>
<line x1="88" x2="909" y1="146" y2="146" stroke="#36521d" stroke-width="1"/>
<g class="tick" text-anchor="end">
<text x="80" y="326.2" textLength="6.87" lengthAdjust="spacingAndGlyphs">0</text>
<text x="80" y="282.2" textLength="6.87" lengthAdjust="spacingAndGlyphs">6</text>
<text x="80" y="238.2" textLength="13.75" lengthAdjust="spacingAndGlyphs">12</text>
<text x="80" y="194.2" textLength="13.75" lengthAdjust="spacingAndGlyphs">18</text>
<text x="80" y="150.2" textLength="13.75" lengthAdjust="spacingAndGlyphs">24</text>
</g>
<g class="tick" text-anchor="end">
<text x="114.1" y="330.6" dy="8.5" transform="rotate(-45 114.1 330.6)" textLength="32.9" lengthAdjust="spacingAndGlyphs">Sep 21</text>
<text x="148.59" y="330.6" dy="8.5" transform="rotate(-45 148.59 330.6)" textLength="32.9" lengthAdjust="spacingAndGlyphs">Sep 26</text>
<text x="183.09" y="330.6" dy="8.5" transform="rotate(-45 183.09 330.6)" textLength="24.8" lengthAdjust="spacingAndGlyphs">Oct 1</text>
<text x="217.58" y="330.6" dy="8.5" transform="rotate(-45 217.58 330.6)" textLength="24.8" lengthAdjust="spacingAndGlyphs">Oct 6</text>
<text x="252.08" y="330.6" dy="8.5" transform="rotate(-45 252.08 330.6)" textLength="29.81" lengthAdjust="spacingAndGlyphs">Oct 11</text>
<text x="286.58" y="330.6" dy="8.5" transform="rotate(-45 286.58 330.6)" textLength="30.58" lengthAdjust="spacingAndGlyphs">Oct 16</text>
<text x="321.07" y="330.6" dy="8.5" transform="rotate(-45 321.07 330.6)" textLength="30.58" lengthAdjust="spacingAndGlyphs">Oct 21</text>
<text x="355.57" y="330.6" dy="8.5" transform="rotate(-45 355.57 330.6)" textLength="30.58" lengthAdjust="spacingAndGlyphs">Oct 26</text>
<text x="390.06" y="330.6" dy="8.5" transform="rotate(-45 390.06 330.6)" textLength="30.58" lengthAdjust="spacingAndGlyphs">Oct 31</text>
<text x="424.56" y="330.6" dy="8.5" transform="rotate(-45 424.56 330.6)" textLength="27.12" lengthAdjust="spacingAndGlyphs">Nov 5</text>
<text x="459.05" y="330.6" dy="8.5" transform="rotate(-45 459.05 330.6)" textLength="32.89" lengthAdjust="spacingAndGlyphs">Nov 10</text>
<text x="493.55" y="330.6" dy="8.5" transform="rotate(-45 493.55 330.6)" textLength="32.89" lengthAdjust="spacingAndGlyphs">Nov 15</text>
<text x="528.05" y="330.6" dy="8.5" transform="rotate(-45 528.05 330.6)" textLength="32.89" lengthAdjust="spacingAndGlyphs">Nov 20</text>
<text x="562.54" y="330.6" dy="8.5" transform="rotate(-45 562.54 330.6)" textLength="32.89" lengthAdjust="spacingAndGlyphs">Nov 25</text>
<text x="597.04" y="330.6" dy="8.5" transform="rotate(-45 597.04 330.6)" textLength="32.89" lengthAdjust="spacingAndGlyphs">Nov 30</text>
<text x="631.53" y="330.6" dy="8.5" transform="rotate(-45 631.53 330.6)" textLength="27.12" lengthAdjust="spacingAndGlyphs">Dec 5</text>
<text x="666.03" y="330.6" dy="8.5" transform="rotate(-45 666.03 330.6)" textLength="32.89" lengthAdjust="spacingAndGlyphs">Dec 10</text>
<text x="700.53" y="330.6" dy="8.5" transform="rotate(-45 700.53 330.6)" textLength="32.89" lengthAdjust="spacingAndGlyphs">Dec 15</text>
<text x="735.02" y="330.6" dy="8.5" transform="rotate(-45 735.02 330.6)" textLength="32.89" lengthAdjust="spacingAndGlyphs">Dec 20</text>
<text x="769.52" y="330.6" dy="8.5" transform="rotate(-45 769.52 330.6)" textLength="32.89" lengthAdjust="spacingAndGlyphs">Dec 25</text>
<text x="804.01" y="330.6" dy="8.5" transform="rotate(-45 804.01 330.6)" textLength="32.89" lengthAdjust="spacingAndGlyphs">Dec 30</text>
<text x="838.51" y="330.6" dy="8.5" transform="rotate(-45 838.51 330.6)" textLength="25.39" lengthAdjust="spacingAndGlyphs">Jan 4</text>
<text x="873" y="330.6" dy="8.5" transform="rotate(-45 873 330.6)" textLength="25.39" lengthAdjust="spacingAndGlyphs">Jan 9</text>
<text x="907.5" y="330.6" dy="8.5" transform="rotate(-45 907.5 330.6)" textLength="31.17" lengthAdjust="spacingAndGlyphs">Jan 14</text>
</g>
<text class="ylab" x="42.4" y="216.3" text-anchor="middle" transform="rotate(-90 42.4 216.3)" textLength="33.4" lengthAdjust="spacingAndGlyphs">Hours</text>
<g class="legend">
<g stroke="#e03131" stroke-width="1.5" fill="none"><line x1="305" x2="309.8" y1="392" y2="392"/><line x1="314.2" x2="319" y1="392" y2="392"/><circle cx="312" cy="392" r="2.2"/></g>
<text x="323.3" y="395" fill="#e03131" textLength="62.4" lengthAdjust="spacingAndGlyphs">Vibecoding</text>
<g stroke="#55d035" stroke-width="1.5" fill="none"><line x1="396" x2="400.8" y1="392" y2="392"/><line x1="405.2" x2="410" y1="392" y2="392"/><circle cx="403" cy="392" r="2.2"/></g>
<text x="414.6" y="395" fill="#55d035" textLength="27.7" lengthAdjust="spacingAndGlyphs">Slack</text>
<g stroke="#d633c8" stroke-width="1.5" fill="none"><line x1="453" x2="457.8" y1="392" y2="392"/><line x1="462.2" x2="467" y1="392" y2="392"/><circle cx="460" cy="392" r="2.2"/></g>
<text x="470.7" y="395" fill="#d633c8" textLength="29.4" lengthAdjust="spacingAndGlyphs">Work</text>
<g stroke="#f2b234" stroke-width="1.5" fill="none"><line x1="510" x2="514.8" y1="392" y2="392"/><line x1="519.2" x2="524" y1="392" y2="392"/><circle cx="517" cy="392" r="2.2"/></g>
<text x="528.5" y="395" fill="#f2b234" textLength="32.1" lengthAdjust="spacingAndGlyphs">Social</text>
<g stroke="#3b5a1d" stroke-width="1.5" fill="none"><line x1="571.2" x2="576" y1="392" y2="392"/><line x1="580.4" x2="585.2" y1="392" y2="392"/><circle cx="578.2" cy="392" r="2.2"/></g>
<text x="589.1" y="395" fill="#3b5a1d" textLength="32.3" lengthAdjust="spacingAndGlyphs">Other</text>
</g>
</svg>
</div>
</body>
</html>
